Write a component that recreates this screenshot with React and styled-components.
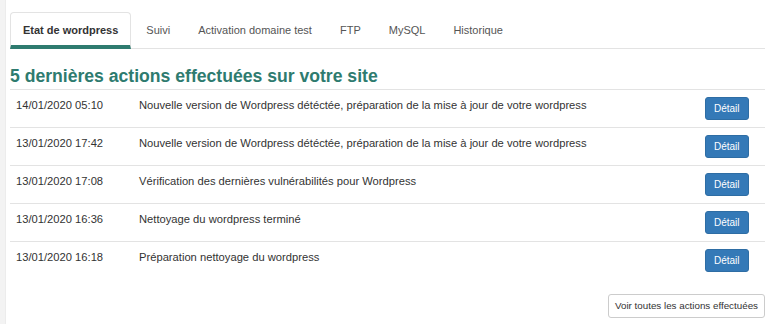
import React from 'react'
import styled, { createGlobalStyle } from 'styled-components'

const GlobalStyle = createGlobalStyle`
    html, body {
        margin: 0;
        padding: 0;
        background: #fff;
        font-family: "Liberation Sans", Arial, sans-serif;
        color: #333;
    }
`

const Page = styled.div`
    display: flex;
    min-height: 324px;
`

const SideStrip = styled.div`
    width: 5px;
    background: #f3f3f3;
    border-right: 1px solid #ececec;
    flex-shrink: 0;
`

const Main = styled.div`
    flex: 1;
    padding: 12px 10px 0 4px;
`

const Tabs = styled.ul`
    display: flex;
    list-style: none;
    margin: 0;
    padding: 0;
    border-bottom: 1px solid #e3e3e3;
`

const Tab = styled.li`
    font-size: 11px;
    line-height: 16px;
    padding: 9px 12px 7px;
    margin-right: 2px;
    margin-bottom: -1px;
    color: ${p => (p.active ? '#333' : '#555')};
    font-weight: ${p => (p.active ? 700 : 400)};
    border: 1px solid ${p => (p.active ? '#e3e3e3' : 'transparent')};
    border-bottom: 4px solid ${p => (p.active ? '#2e7b6f' : 'transparent')};
    border-radius: 4px 4px 0 0;
    cursor: pointer;
`

const Title = styled.h3`
    margin: 17px 0 3px;
    font-size: 17.6px;
    line-height: 20px;
    font-weight: 700;
    color: #2e7b6f;
`

const Table = styled.div`
    display: flex;
    flex-direction: column;
`

const Row = styled.div`
    display: grid;
    grid-template-columns: 123px 1fr 60px;
    border-top: 1px solid #e3e3e3;
    padding: 7px 0 7px 6px;
    font-size: 11.2px;
    line-height: 17px;
    height: 23px;
    align-items: start;
`

const DetailButton = styled.button`
    font-family: inherit;
    font-size: 10px;
    line-height: 13px;
    padding: 4px 8px;
    height: 23px;
    color: #fff;
    background: #3479b7;
    border: 1px solid #2e6da4;
    border-radius: 3px;
    justify-self: start;
    cursor: pointer;
`

const Footer = styled.div`
    display: flex;
    justify-content: flex-end;
    margin-top: 15px;
`

const AllButton = styled.button`
    font-family: inherit;
    font-size: 9.8px;
    line-height: 14px;
    padding: 4px 6px;
    height: 24px;
    color: #333;
    background: #fff;
    border: 1px solid #ccc;
    border-radius: 3px;
    cursor: pointer;
`

const tabs = ['Etat de wordpress', 'Suivi', 'Activation domaine test', 'FTP', 'MySQL', 'Historique']

const actions = [
    ['14/01/2020 05:10', 'Nouvelle version de Wordpress détéctée, préparation de la mise à jour de votre wordpress'],
    ['13/01/2020 17:42', 'Nouvelle version de Wordpress détéctée, préparation de la mise à jour de votre wordpress'],
    ['13/01/2020 17:08', 'Vérification des dernières vulnérabilités pour Wordpress'],
    ['13/01/2020 16:36', 'Nettoyage du wordpress terminé'],
    ['13/01/2020 16:18', 'Préparation nettoyage du wordpress'],
]

const App = () => {
    return (
        <>
            <GlobalStyle />
            <Page>
                <SideStrip />
                <Main>
                    <Tabs>
                        {tabs.map((t, i) => (
                            <Tab key={t} active={i === 0}>{t}</Tab>
                        ))}
                    </Tabs>
                    <Title>5 dernières actions effectuées sur votre site</Title>
                    <Table>
                        {actions.map(([date, label]) => (
                            <Row key={date}>
                                <span>{date}</span>
                                <span>{label}</span>
                                <DetailButton>Détail</DetailButton>
                            </Row>
                        ))}
                    </Table>
                    <Footer>
                        <AllButton>Voir toutes les actions effectuées</AllButton>
                    </Footer>
                </Main>
            </Page>
        </>
    )
}

export default App
